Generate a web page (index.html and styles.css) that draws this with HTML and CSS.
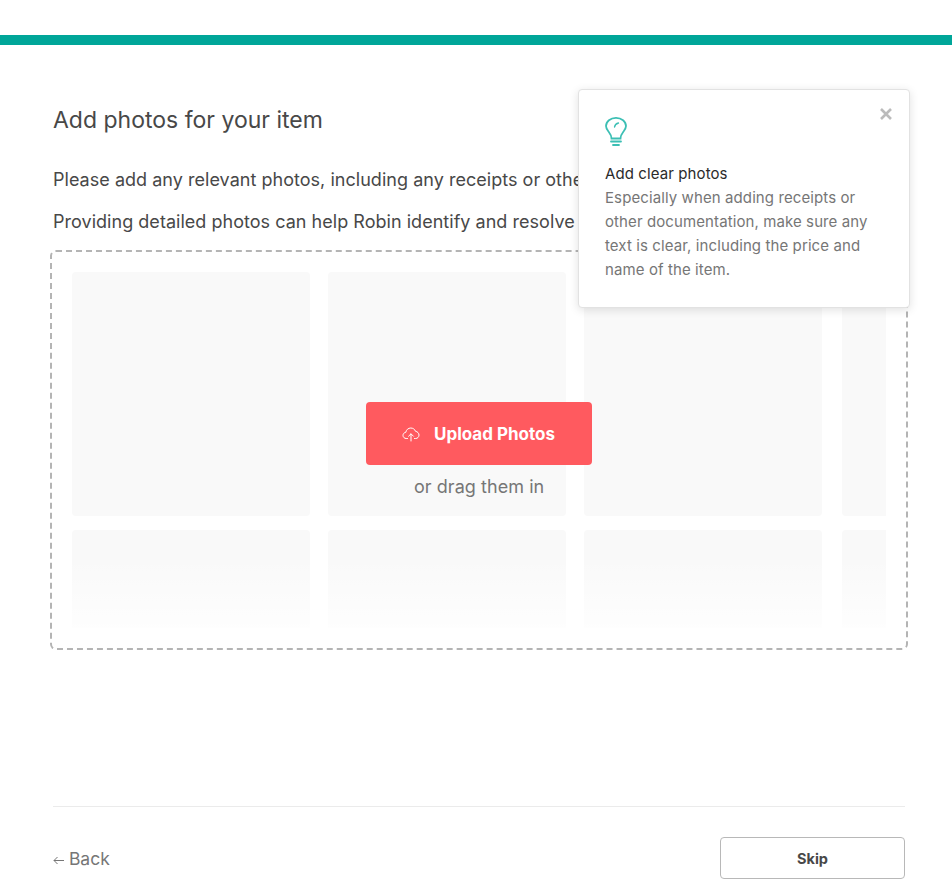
FILE: index.html
```html
<!DOCTYPE html>
<html lang="en">
<head>
    <meta charset="UTF-8">
    <meta name="viewport" content="width=device-width, initial-scale=1.0">
    <title>Add photos for your item</title>
    <link rel="stylesheet" href="styles.css">
</head>
<body>
    <div class="progress"></div>

    <div class="page">
        <h1 class="title">Add photos for your item</h1>
        <p class="intro">Please add any relevant photos, including any receipts or other documentation.</p>
        <p class="intro">Providing detailed photos can help Robin identify and resolve your claim.</p>

        <div class="dropzone">
            <div class="tiles">
                <div class="tile"></div>
                <div class="tile"></div>
                <div class="tile"></div>
                <div class="tile"></div>
                <div class="tile"></div>
                <div class="tile"></div>
                <div class="tile"></div>
                <div class="tile"></div>
            </div>
            <div class="tiles-fade"></div>
            <div class="upload">
                <button class="upload-button" type="button">
                    <svg class="cloud" width="18" height="16" viewBox="0 0 18 16" fill="none" stroke="#fff" stroke-width="1" stroke-linecap="round" stroke-linejoin="round">
                        <path d="M5.500 12.500H4.200C2.400 12.500 1 11.100 1 9.400c0-1.600 1.200-2.900 2.800-3.100C4.200 3.800 6.300 2 8.800 2c2.200 0 4.100 1.400 4.800 3.400 1.900.1 3.400 1.800 3.400 3.700 0 1.900-1.500 3.400-3.400 3.400h-1.100"/>
                        <path d="M9 15V8M6.600 10.200 9 7.800l2.400 2.400"/>
                    </svg>
                    Upload Photos
                </button>
                <div class="drag-hint">or drag them in</div>
            </div>
        </div>

        <div class="footer">
            <a class="back" href="#">
                <svg class="back-arrow" width="11" height="9" viewBox="0 0 11 9" fill="none" stroke="#767676" stroke-width="1">
                    <path d="M11 4.500H1M4.500 1 1 4.500 4.500 8"/>
                </svg>
                Back
            </a>
            <button class="skip" type="button">Skip</button>
        </div>

        <div class="tip">
            <svg class="tip-close" width="12" height="12" viewBox="0 0 12 12" stroke="#bbb" stroke-width="2.600">
                <path d="M1 1l10 10M11 1 1 11"/>
            </svg>
            <svg class="bulb" width="24" height="30" viewBox="0 0 24 30" fill="none" stroke="#3cbfb4" stroke-width="1.800" stroke-linecap="round">
                <path d="M7.500 22.500c0-3.500-1.500-5-3.200-7.200C3 13.500 2 12 2 10 2 5.500 6.500 1.800 12 1.800S22 5.500 22 10c0 2-1 3.500-2.300 5.300-1.700 2.200-3.200 3.700-3.200 7.200z"/>
                <path d="M7 25.500h10M9 29h6"/>
                <path d="M10.500 11c.4-2 1.900-3.600 4-4" stroke-width="1.300"/>
            </svg>
            <div class="tip-title">Add clear photos</div>
            <p class="tip-text">Especially when adding receipts or other documentation, make sure any text is clear, including the price and name of the item.</p>
        </div>
    </div>
</body>
</html>
```

FILE: styles.css
```css
body {
    margin: 0;
    padding-top: 35px;
    font-family: "Inter", Arial, sans-serif;
    color: #484848;
    background-color: #fff;
}

.progress {
    height: 10px;
    background-color: #00a699;
}

.page {
    position: relative;
    padding: 0 47px 0 53px;
}

.title {
    margin: 0;
    padding-top: 59px;
    font-size: 23px;
    line-height: 32px;
    font-weight: 400;
}

.intro {
    margin: 0;
    padding-top: 17px;
    font-size: 18px;
    line-height: 25px;
    letter-spacing: 0.03px;
    white-space: nowrap;
}

.title + .intro {
    padding-top: 31px;
}

.dropzone {
    position: relative;
    margin: 16px -3px 0 -3px;
    height: 396px;
    border: 2px dashed #b4b4b4;
    border-radius: 6px;
}

.tiles {
    display: grid;
    grid-template-columns: 238px 238px 238px 238px;
    grid-template-rows: 244px 244px;
    gap: 14px 18px;
    height: 356px;
    width: 814px;
    margin: 20px 0 0 20px;
    overflow: hidden;
}

.tile {
    background-color: #f9f9f9;
    border-radius: 4px;
}

.tile:nth-child(4n) {
    margin-left: 2px;
}

.tiles-fade {
    position: absolute;
    left: 20px;
    top: 306px;
    width: 814px;
    height: 70px;
    background: linear-gradient(rgba(255, 255, 255, 0), rgba(255, 255, 255, 0.8));
}

.upload {
    position: absolute;
    top: 150px;
    left: 314px;
}

.upload-button {
    display: flex;
    align-items: center;
    gap: 14px;
    width: 226px;
    height: 63px;
    padding: 0 0 0 36px;
    border: none;
    border-radius: 4px;
    background-color: #ff5a5f;
    color: #fff;
    font-family: inherit;
    font-size: 17px;
    font-weight: 700;
}

.drag-hint {
    margin: 9px 0 0 48px;
    font-size: 18px;
    line-height: 26px;
    letter-spacing: 0.05px;
    color: #767676;
}

.footer {
    display: flex;
    justify-content: space-between;
    align-items: center;
    margin-top: 156px;
    padding-top: 30px;
    border-top: 1px solid #ebebeb;
}

.back {
    color: #767676;
    font-size: 17.5px;
    text-decoration: none;
}

.skip {
    width: 185px;
    height: 42px;
    background-color: #fff;
    border: 1px solid #b8b8b8;
    border-radius: 4px;
    color: #484848;
    font-family: inherit;
    font-size: 14.5px;
    font-weight: 700;
}

.tip {
    position: absolute;
    top: 44px;
    left: 578px;
    box-sizing: border-box;
    width: 332px;
    height: 219px;
    padding: 26px 26px 0;
    background-color: #fff;
    border: 1px solid #e2e2e2;
    border-radius: 4px;
    box-shadow: 0 2px 10px rgba(0, 0, 0, 0.12);
}

.tip-close {
    position: absolute;
    top: 18px;
    right: 17px;
}

.bulb {
    display: block;
    margin-left: -1px;
}

.tip-title {
    margin-top: 16px;
    font-size: 15px;
    line-height: 24px;
    letter-spacing: 0.1px;
    color: #2b2b2b;
}

.tip-text {
    margin: 0;
    font-size: 15px;
    line-height: 24px;
    letter-spacing: 0.1px;
    color: #767676;
}
```
